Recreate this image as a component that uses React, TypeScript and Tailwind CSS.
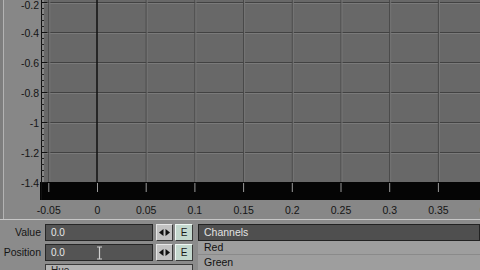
import React from 'react';

const yLabels = ['-0.2', '-0.4', '-0.6', '-0.8', '-1', '-1.2', '-1.4'];
const xLabels = ['-0.05', '0', '0.05', '0.1', '0.15', '0.2', '0.25', '0.3', '0.35', '0.4'];

const xAt = (i: number) => 48.3 + i * 48.7;
const yAt = (i: number) => 2 + i * 30;

function Graph() {
  const minor: number[] = [];
  for (let y = 2; y < 182; y += 6) minor.push(y);

  return (
    <svg width={480} height={219} className="block" style={{ fontFamily: '"Liberation Sans", Arial, sans-serif' }}>
      <rect x={0} y={0} width={480} height={219} fill="#878787" />
      <line x1={3.5} y1={0} x2={3.5} y2={219} stroke="#b3b3b3" />
      <rect x={0} y={0} width={3} height={219} fill="#7d7d7d" />

      <rect x={44} y={0} width={436} height={182} fill="#686868" />

      {yLabels.slice(0, 6).map((_, i) => (
        <g key={i}>
          <line x1={44} y1={yAt(i) + 0.5} x2={480} y2={yAt(i) + 0.5} stroke="#424242" />
          <line x1={44} y1={yAt(i) + 1.5} x2={480} y2={yAt(i) + 1.5} stroke="#7a7a7a" />
        </g>
      ))}

      {xLabels.map((_, i) =>
        i === 1 ? null : (
          <g key={i}>
            <line x1={xAt(i) + 0.5} y1={0} x2={xAt(i) + 0.5} y2={182} stroke="#464646" />
            <line x1={xAt(i) + 1.5} y1={0} x2={xAt(i) + 1.5} y2={182} stroke="#767676" />
          </g>
        )
      )}
      <line x1={97} y1={0} x2={97} y2={182} stroke="#111" strokeWidth={1.5} />

      <rect x={40} y={182} width={440} height={18} fill="#050505" />
      {xLabels.map((_, i) => (
        <line key={i} x1={xAt(i) + 0.5} y1={183} x2={xAt(i) + 0.5} y2={192} stroke="#9a9a9a" />
      ))}

      <line x1={41.5} y1={0} x2={41.5} y2={200} stroke="#111" />
      {minor.map((y) => (
        <line key={y} x1={41} y1={y + 0.5} x2={44} y2={y + 0.5} stroke="#222" />
      ))}
      {yLabels.map((_, i) => (
        <line key={i} x1={41} y1={yAt(i) + 0.5} x2={47} y2={yAt(i) + 0.5} stroke="#111" />
      ))}

      {yLabels.map((l, i) => (
        <text key={l} x={39} y={yAt(i) + (i === 0 ? 7 : 5)} textAnchor="end" fontSize={10.5} fill="#151515">
          {l}
        </text>
      ))}
      {xLabels.map((l, i) => (
        <text key={l} x={xAt(i) + 0.5} y={214} textAnchor="middle" fontSize={10.5} fill="#151515">
          {l}
        </text>
      ))}
    </svg>
  );
}

function ArrowsButton() {
  return (
    <div className="flex h-[17px] w-[17px] items-center justify-center border border-t-[#e6e6e6] border-l-[#e6e6e6] border-b-[#3a3a3a] border-r-[#3a3a3a] bg-[#c2c2c2]">
      <svg width={11} height={7} viewBox="0 0 11 7">
        <path d="M0 3.5 L4.5 0 L4.5 7 Z" fill="#111" />
        <path d="M11 3.5 L6.5 0 L6.5 7 Z" fill="#111" />
      </svg>
    </div>
  );
}

function EButton() {
  return (
    <div className="flex h-[17px] w-[18px] items-center justify-center border border-t-[#f0f8f4] border-l-[#f0f8f4] border-b-[#3a3a3a] border-r-[#3a3a3a] bg-[#c4d8ce] text-[10px] leading-none text-[#1a1a1a]">
      E
    </div>
  );
}

function Field({ label, cursor }: { label: string; cursor?: boolean }) {
  return (
    <div className="flex h-[17px] items-center">
      <div className="w-[42px] pr-[1px] text-right text-[10.5px] leading-none text-[#151515]">{label}</div>
      <div className="relative ml-[3px] flex h-[17px] w-[108px] items-center border border-[#262626] bg-[#545454] pl-[5px] text-[10px] leading-none text-[#e8e8e8]">
        0.0
        {cursor && (
          <svg className="absolute left-[50px] top-[1px]" width={7} height={14} viewBox="0 0 7 14">
            <path d="M1 1 H6 M3.5 1 V13 M1 13 H6" stroke="#d0d0d0" strokeWidth={1.2} fill="none" />
          </svg>
        )}
      </div>
      <div className="ml-[3px]">
        <ArrowsButton />
      </div>
      <div className="ml-[2px]">
        <EButton />
      </div>
    </div>
  );
}

export default function App() {
  return (
    <div
      className="flex h-[270px] w-[480px] flex-col overflow-hidden bg-[#878787]"
      style={{ fontFamily: '"Liberation Sans", Arial, sans-serif' }}
    >
      <Graph />
      <div className="flex h-[51px] border-t border-[#c6c6c6] bg-[#8b8b8b]">
        <div className="flex w-[198px] flex-col gap-[3px] pt-[4px]">
          <Field label="Value" />
          <Field label="Position" cursor />
          <div className="ml-[45px] h-[10px] w-[148px] border border-[#3a3a3a] bg-[#b4b4b4] pl-[5px] text-[10px] leading-[12px] text-[#222]">
            Hue
          </div>
        </div>
        <div className="mt-[4px] flex flex-1 flex-col">
          <div className="flex h-[17px] items-center border border-[#222] bg-[#4f4f4f] pl-[5px] text-[10.5px] leading-none text-[#e2e2e2]">
            Channels
          </div>
          <div className="flex h-[15px] items-center border-b border-[#8a8a8a] bg-[#9e9e9e] pl-[6px] text-[10.5px] leading-none text-[#111]">
            Red
          </div>
          <div className="flex h-[15px] items-center bg-[#9e9e9e] pl-[6px] text-[10.5px] leading-none text-[#111]">
            Green
          </div>
        </div>
      </div>
    </div>
  );
}
